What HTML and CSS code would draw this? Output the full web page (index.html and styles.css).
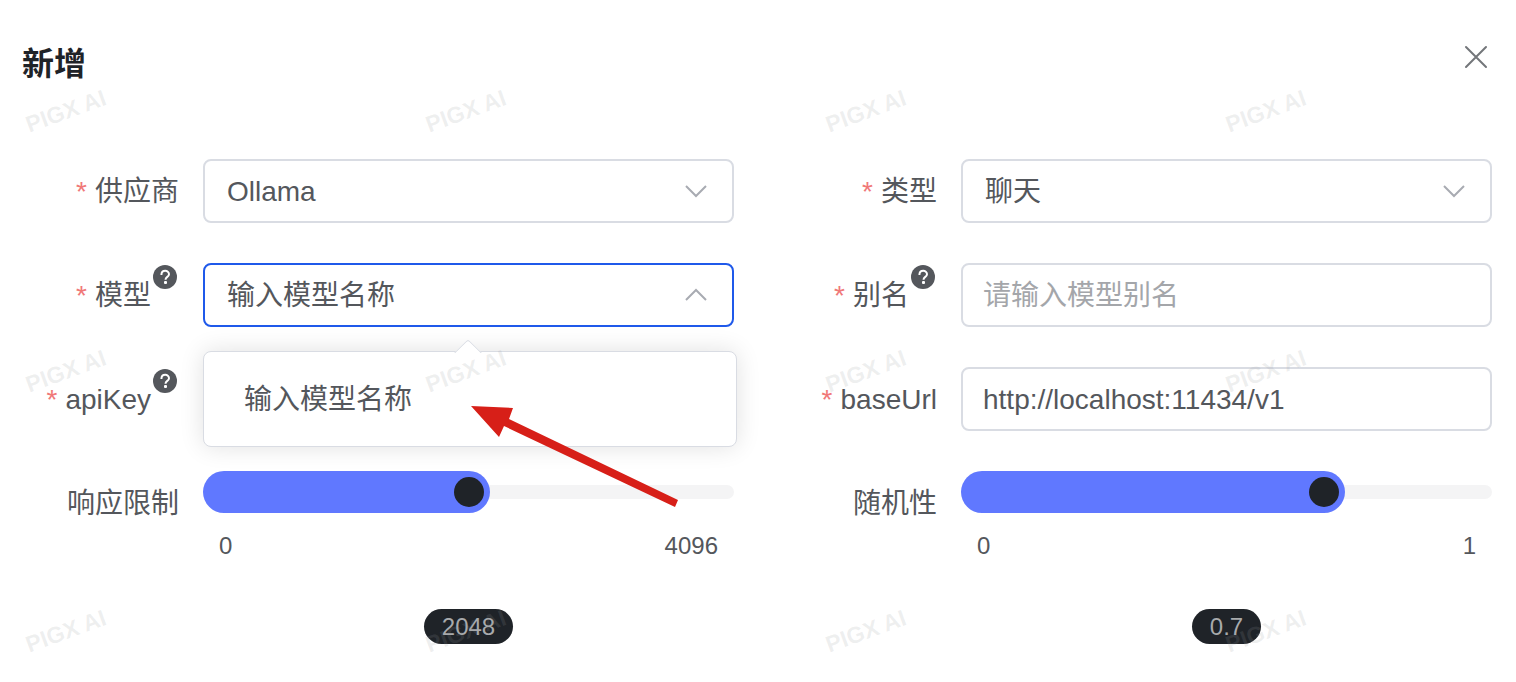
FILE: index.html
```html
<!DOCTYPE html>
<html lang="zh-CN">
<head>
    <meta charset="UTF-8">
    <meta name="viewport" content="width=device-width, initial-scale=1.0">
    <title>新增</title>
    <link rel="stylesheet" href="styles.css">
</head>
<body>
    <main class="dialog">
        <header class="dialog-header">
            <h1>新增</h1>
            <button class="close-btn" type="button" aria-label="关闭">
                <svg viewBox="0 0 24 24" width="24" height="24"><path d="M2 2L22 22M22 2L2 22"/></svg>
            </button>
        </header>

        <form class="form">
            <div class="form-item">
                <label class="form-label required" for="provider">供应商</label>
                <div class="control">
                    <select id="provider"><option>Ollama</option></select>
                    <svg class="chevron" viewBox="0 0 28 28"><path d="M4 9L14 19L24 9"/></svg>
                </div>
            </div>

            <div class="form-item">
                <label class="form-label required" for="type">类型</label>
                <div class="control">
                    <select id="type"><option>聊天</option></select>
                    <svg class="chevron" viewBox="0 0 28 28"><path d="M4 9L14 19L24 9"/></svg>
                </div>
            </div>

            <div class="form-item">
                <label class="form-label required" for="model">模型
                    <svg class="help" viewBox="0 0 28 28"><circle cx="14" cy="14" r="12"/><path d="M10.4 12C10.4 6.4 18 6.8 18 11.2C18 14 14.5 13.8 14.5 16.8"/><rect x="13" y="18" width="3" height="3" rx="1"/></svg>
                </label>
                <div class="control is-open">
                    <select id="model"><option>输入模型名称</option></select>
                    <svg class="chevron" viewBox="0 0 28 28"><path d="M4 19L14 9L24 19"/></svg>
                    <div class="popper">
                        <button class="option" type="button">输入模型名称</button>
                    </div>
                    <svg class="pointer" viewBox="0 0 208 102"><path d="M0 0L42 2L38 13L207 94L204 101L33 20L28 31Z"/></svg>
                </div>
            </div>

            <div class="form-item">
                <label class="form-label required" for="alias">别名
                    <svg class="help" viewBox="0 0 28 28"><circle cx="14" cy="14" r="12"/><path d="M10.4 12C10.4 6.4 18 6.8 18 11.2C18 14 14.5 13.8 14.5 16.8"/><rect x="13" y="18" width="3" height="3" rx="1"/></svg>
                </label>
                <div class="control">
                    <input id="alias" type="text" placeholder="请输入模型别名">
                </div>
            </div>

            <div class="form-item">
                <label class="form-label required" for="apiKey">apiKey
                    <svg class="help" viewBox="0 0 28 28"><circle cx="14" cy="14" r="12"/><path d="M10.4 12C10.4 6.4 18 6.8 18 11.2C18 14 14.5 13.8 14.5 16.8"/><rect x="13" y="18" width="3" height="3" rx="1"/></svg>
                </label>
                <div class="control">
                    <input id="apiKey" type="text">
                </div>
            </div>

            <div class="form-item">
                <label class="form-label required" for="baseUrl">baseUrl</label>
                <div class="control">
                    <input id="baseUrl" type="text" value="http://localhost:11434/v1">
                </div>
            </div>

            <div class="form-item">
                <label class="form-label" for="maxTokens">响应限制</label>
                <div class="slider-field">
                    <div class="slider" style="--value: 0.5">
                        <div class="slider-track"></div>
                        <div class="slider-fill"></div>
                        <input id="maxTokens" type="range" min="0" max="4096" value="2048">
                    </div>
                    <div class="range"><span>0</span><span>4096</span></div>
                    <output class="tag" for="maxTokens">2048</output>
                </div>
            </div>

            <div class="form-item">
                <label class="form-label" for="temperature">随机性</label>
                <div class="slider-field">
                    <div class="slider" style="--value: 0.7">
                        <div class="slider-track"></div>
                        <div class="slider-fill"></div>
                        <input id="temperature" type="range" min="0" max="1" step="0.1" value="0.7">
                    </div>
                    <div class="range"><span>0</span><span>1</span></div>
                    <output class="tag" for="temperature">0.7</output>
                </div>
            </div>
        </form>
    </main>

    <div class="watermark" aria-hidden="true">
        <span>PIGX AI</span><span>PIGX AI</span><span>PIGX AI</span><span>PIGX AI</span>
        <span>PIGX AI</span><span>PIGX AI</span><span>PIGX AI</span><span>PIGX AI</span>
        <span>PIGX AI</span><span>PIGX AI</span><span>PIGX AI</span><span>PIGX AI</span>
    </div>

    <script>
        // Keep the fill and the value tag in step with each slider
        document.querySelectorAll('input[type="range"]').forEach((input) => {
            const tag = document.querySelector(`output[for="${input.id}"]`);
            input.addEventListener('input', () => {
                input.parentElement.style.setProperty('--value', input.value / input.max);
                tag.textContent = input.value;
            });
        });
    </script>
</body>
</html>
```

FILE: styles.css
```css
:root {
    --primary: #1f59ea;
    --fill: #6078ff;
    --dark: #1f2328;
    --text: #54575c;
    --placeholder: #a4a6aa;
    --border: #d9dce3;
    --track: #f4f4f5;
    --danger: #f07878;
}

* {
    margin: 0;
    padding: 0;
    box-sizing: border-box;
}

body {
    position: relative;
    min-height: 100vh;
    overflow-x: hidden;
    background-color: #ffffff;
    color: var(--text);
    font-family: "Liberation Sans", "Noto Sans CJK SC", sans-serif;
    font-size: 28px;
}

button,
input,
select {
    font: inherit;
    color: inherit;
    background: none;
    border: none;
    outline: none;
    appearance: none;
}

svg {
    display: block;
    fill: none;
}

.dialog-header {
    display: flex;
    justify-content: space-between;
    align-items: flex-start;
    padding: 35px 18px 66px 22px;
}

h1 {
    color: var(--dark);
    font-size: 32px;
    font-weight: 700;
    line-height: 58px;
}

.close-btn {
    padding: 10px;
    cursor: pointer;
}

.close-btn svg {
    stroke: #73767a;
    stroke-width: 2;
    stroke-linecap: round;
}

.form {
    display: grid;
    grid-template-columns: 1fr 1fr;
    row-gap: 38px;
}

.form-item {
    display: grid;
    grid-template-columns: 179px 1fr;
    column-gap: 24px;
    align-items: start;
    padding-right: 24px;
}

.form-label {
    display: flex;
    justify-content: flex-end;
    line-height: 66px;
    white-space: nowrap;
}

.required::before {
    content: "*";
    margin-right: 8px;
    color: var(--danger);
}

.help {
    width: 28px;
    height: 28px;
}

.help circle {
    fill: var(--text);
}

.help path {
    stroke: #ffffff;
    stroke-width: 2;
}

.help rect {
    fill: #ffffff;
}

.control {
    display: grid;
    position: relative;
}

.control select,
.control input {
    grid-area: 1 / 1;
    width: 100%;
    height: 64px;
    padding: 2px 20px 0;
    border: 2px solid var(--border);
    border-radius: 8px;
}

.control select {
    padding: 1px 22px 0;
}

.control input::placeholder {
    color: var(--placeholder);
}

.control.is-open select {
    border-color: var(--primary);
}

.chevron {
    grid-area: 1 / 1;
    place-self: center end;
    width: 28px;
    height: 28px;
    margin-right: 24px;
    stroke: #a8abb2;
    stroke-width: 2;
    pointer-events: none;
}

/* Dropdown below the open select */
.popper {
    position: absolute;
    z-index: 1;
    top: 88px;
    left: 0;
    width: calc(100% + 3px);
    padding: 12px 0 10px;
    background-color: #ffffff;
    border: 1px solid var(--border);
    border-radius: 8px;
    box-shadow: 0 0 24px rgba(0, 0, 0, 0.12);
}

.popper::before {
    content: "";
    position: absolute;
    top: -9px;
    left: calc(50% - 12px);
    width: 18px;
    height: 18px;
    background-color: #ffffff;
    border: 1px solid var(--border);
    border-right-color: transparent;
    border-bottom-color: transparent;
    border-top-left-radius: 4px;
    transform: rotate(45deg);
}

.option {
    display: block;
    width: 100%;
    padding: 0 40px;
    line-height: 72px;
    text-align: left;
    cursor: pointer;
}

.pointer {
    position: absolute;
    z-index: 2;
    top: 143px;
    left: 268px;
    width: 208px;
    height: 102px;
    fill: #d71f18;
    pointer-events: none;
}

.slider-field {
    display: flex;
    flex-direction: column;
}

.slider {
    display: grid;
    align-items: center;
}

.slider > * {
    grid-area: 1 / 1;
}

.slider-track {
    height: 14px;
    background-color: var(--track);
    border-radius: 7px;
}

.slider-fill {
    width: calc(42px + (100% - 42px) * var(--value));
    height: 42px;
    background-color: var(--fill);
    border-radius: 21px;
}

.slider input {
    width: 100%;
    height: 42px;
    cursor: pointer;
}

.slider input::-webkit-slider-thumb {
    appearance: none;
    width: 42px;
    height: 42px;
    background-color: var(--dark);
    background-clip: padding-box;
    border: 6px solid transparent;
    border-radius: 50%;
}

.range {
    display: flex;
    justify-content: space-between;
    margin-top: 16px;
    padding: 0 16px;
    font-size: 24px;
    line-height: 34px;
}

.tag {
    align-self: center;
    margin-top: 46px;
    padding: 0 18px;
    background-color: var(--dark);
    border-radius: 18px;
    color: #a8aaac;
    font-size: 24px;
    line-height: 35px;
}

.watermark {
    position: absolute;
    z-index: 3;
    inset: 0;
    display: grid;
    grid-template-columns: repeat(4, 400px);
    grid-auto-rows: 260px;
    overflow: hidden;
    color: rgba(150, 153, 158, 0.16);
    font-size: 23px;
    font-weight: 700;
    line-height: 28px;
    pointer-events: none;
}

.watermark span {
    justify-self: start;
    margin: 97px 0 0 24px;
    height: 28px;
    transform: rotate(-20deg);
}
```
